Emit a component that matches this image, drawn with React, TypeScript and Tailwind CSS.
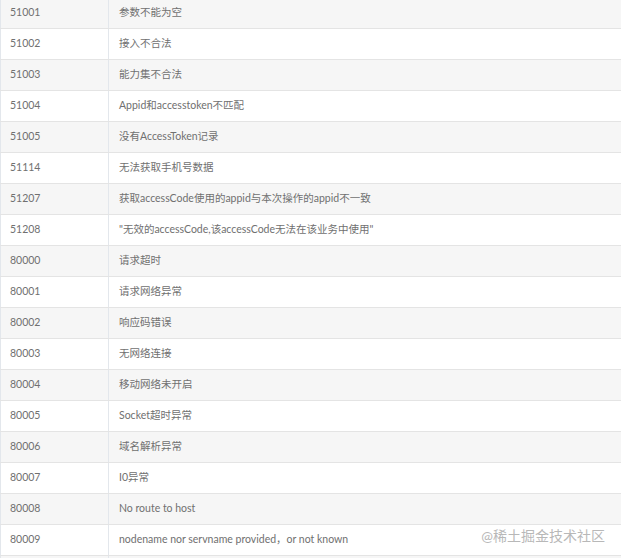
const ROWS: [string, string][] = [
  ["51001", "参数不能为空"],
  ["51002", "接入不合法"],
  ["51003", "能力集不合法"],
  ["51004", "Appid和accesstoken不匹配"],
  ["51005", "没有AccessToken记录"],
  ["51114", "无法获取手机号数据"],
  ["51207", "获取accessCode使用的appid与本次操作的appid不一致"],
  ["51208", "\"无效的accessCode,该accessCode无法在该业务中使用\""],
  ["80000", "请求超时"],
  ["80001", "请求网络异常"],
  ["80002", "响应码错误"],
  ["80003", "无网络连接"],
  ["80004", "移动网络未开启"],
  ["80005", "Socket超时异常"],
  ["80006", "域名解析异常"],
  ["80007", "I0异常"],
  ["80008", "No route to host"],
  ["80009", "nodename nor servname provided，or not known"],
  ["", ""],
];

export default function App() {
  return (
    <div
      className="relative h-[558px] w-[621px] overflow-hidden bg-white text-[10.5px] text-[#707070]"
      style={{ fontFamily: 'Lato, "Noto Sans CJK SC", sans-serif' }}
    >
      <div className="-mt-[2px] flex flex-col">
        {ROWS.map(([code, msg], i) => (
          <div
            key={i}
            className={`grid h-[31px] grid-cols-[109px_1fr] border-b border-[#e4e4e4] ${
              i % 2 === 0 ? "bg-[#f6f6f6]" : "bg-white"
            }`}
          >
            <div className="flex items-center border-x border-[#e3e7ec] pl-[9px]">{code}</div>
            <div className="flex items-center whitespace-nowrap pl-[10px]">{msg}</div>
          </div>
        ))}
      </div>

      {/* watermark */}
      <div className="absolute right-[16px] top-[527px] text-[14px] leading-[18px] text-[#b8b8b8]">
        @稀土掘金技术社区
      </div>
    </div>
  );
}
